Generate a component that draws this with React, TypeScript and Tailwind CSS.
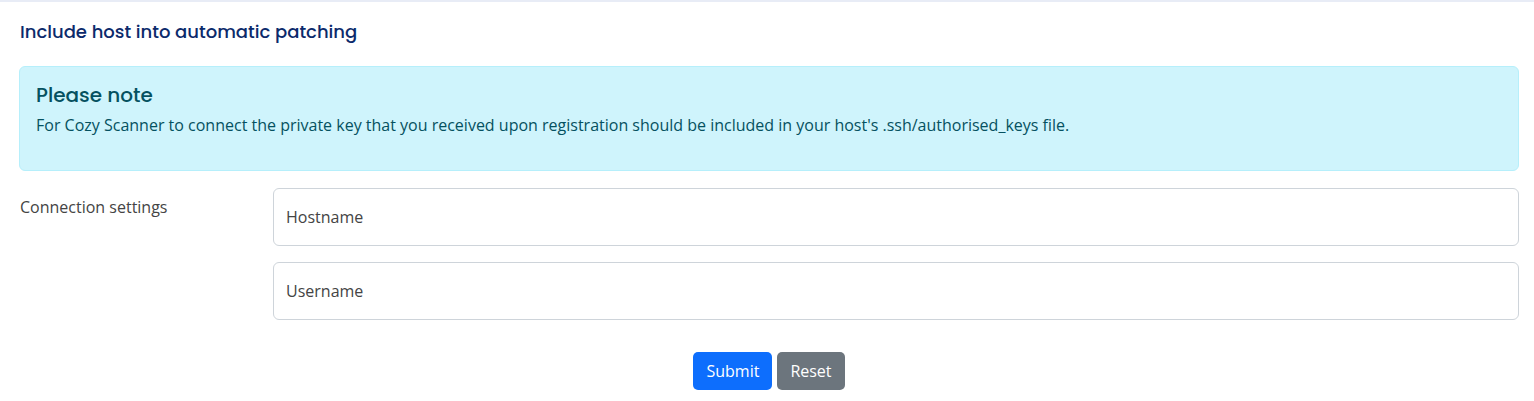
export default function App() {
  const body = { fontFamily: '"Open Sans", "Liberation Sans", sans-serif' };
  const head = { fontFamily: 'Poppins, Inter, "Open Sans", sans-serif' };
  return (
    <div className="w-[1534px] h-[401px] bg-white border-t-2 border-[#e8ecf6] text-[#212529]" style={body}>
      <div className="pl-[19px] pr-[15px]">
        <h2 className="text-[18px] font-medium text-[#0c2a6b] pt-[17px] leading-[26px] pl-px" style={head}>
          Include host into automatic patching
        </h2>
        <div className="mt-[21px] h-[105px] rounded-[6px] border border-[#b6effb] bg-[#cff4fc] px-[16px] pt-[15px] text-[#055160]">
          <h4 className="text-[20px] font-medium leading-[26px]" style={head}>Please note</h4>
          <p className="text-[16px] leading-[24px] mt-[5px]">
            For Cozy Scanner to connect the private key that you received upon registration should be included in your host's .ssh/authorised_keys file.
          </p>
        </div>
        <div className="flex mt-[17px]">
          <div className="w-[254px] text-[16px] leading-[24px] pt-[7px] pl-px text-[#444]">Connection settings</div>
          <div className="flex-1 flex flex-col gap-[16px]">
            <div className="h-[58px] rounded-[6px] border border-[#ced4da] flex items-center px-[12px] text-[16px] text-[#444]">Hostname</div>
            <div className="h-[58px] rounded-[6px] border border-[#ced4da] flex items-center px-[12px] text-[16px] text-[#444]">Username</div>
          </div>
        </div>
        <div className="flex justify-center gap-[5px] mt-[32px]">
          <button className="h-[38px] px-[13px] rounded-[5px] bg-[#0d6efd] text-white text-[16px]">Submit</button>
          <button className="h-[38px] px-[13px] rounded-[5px] bg-[#6c757d] text-white text-[16px]">Reset</button>
        </div>
      </div>
    </div>
  );
}
